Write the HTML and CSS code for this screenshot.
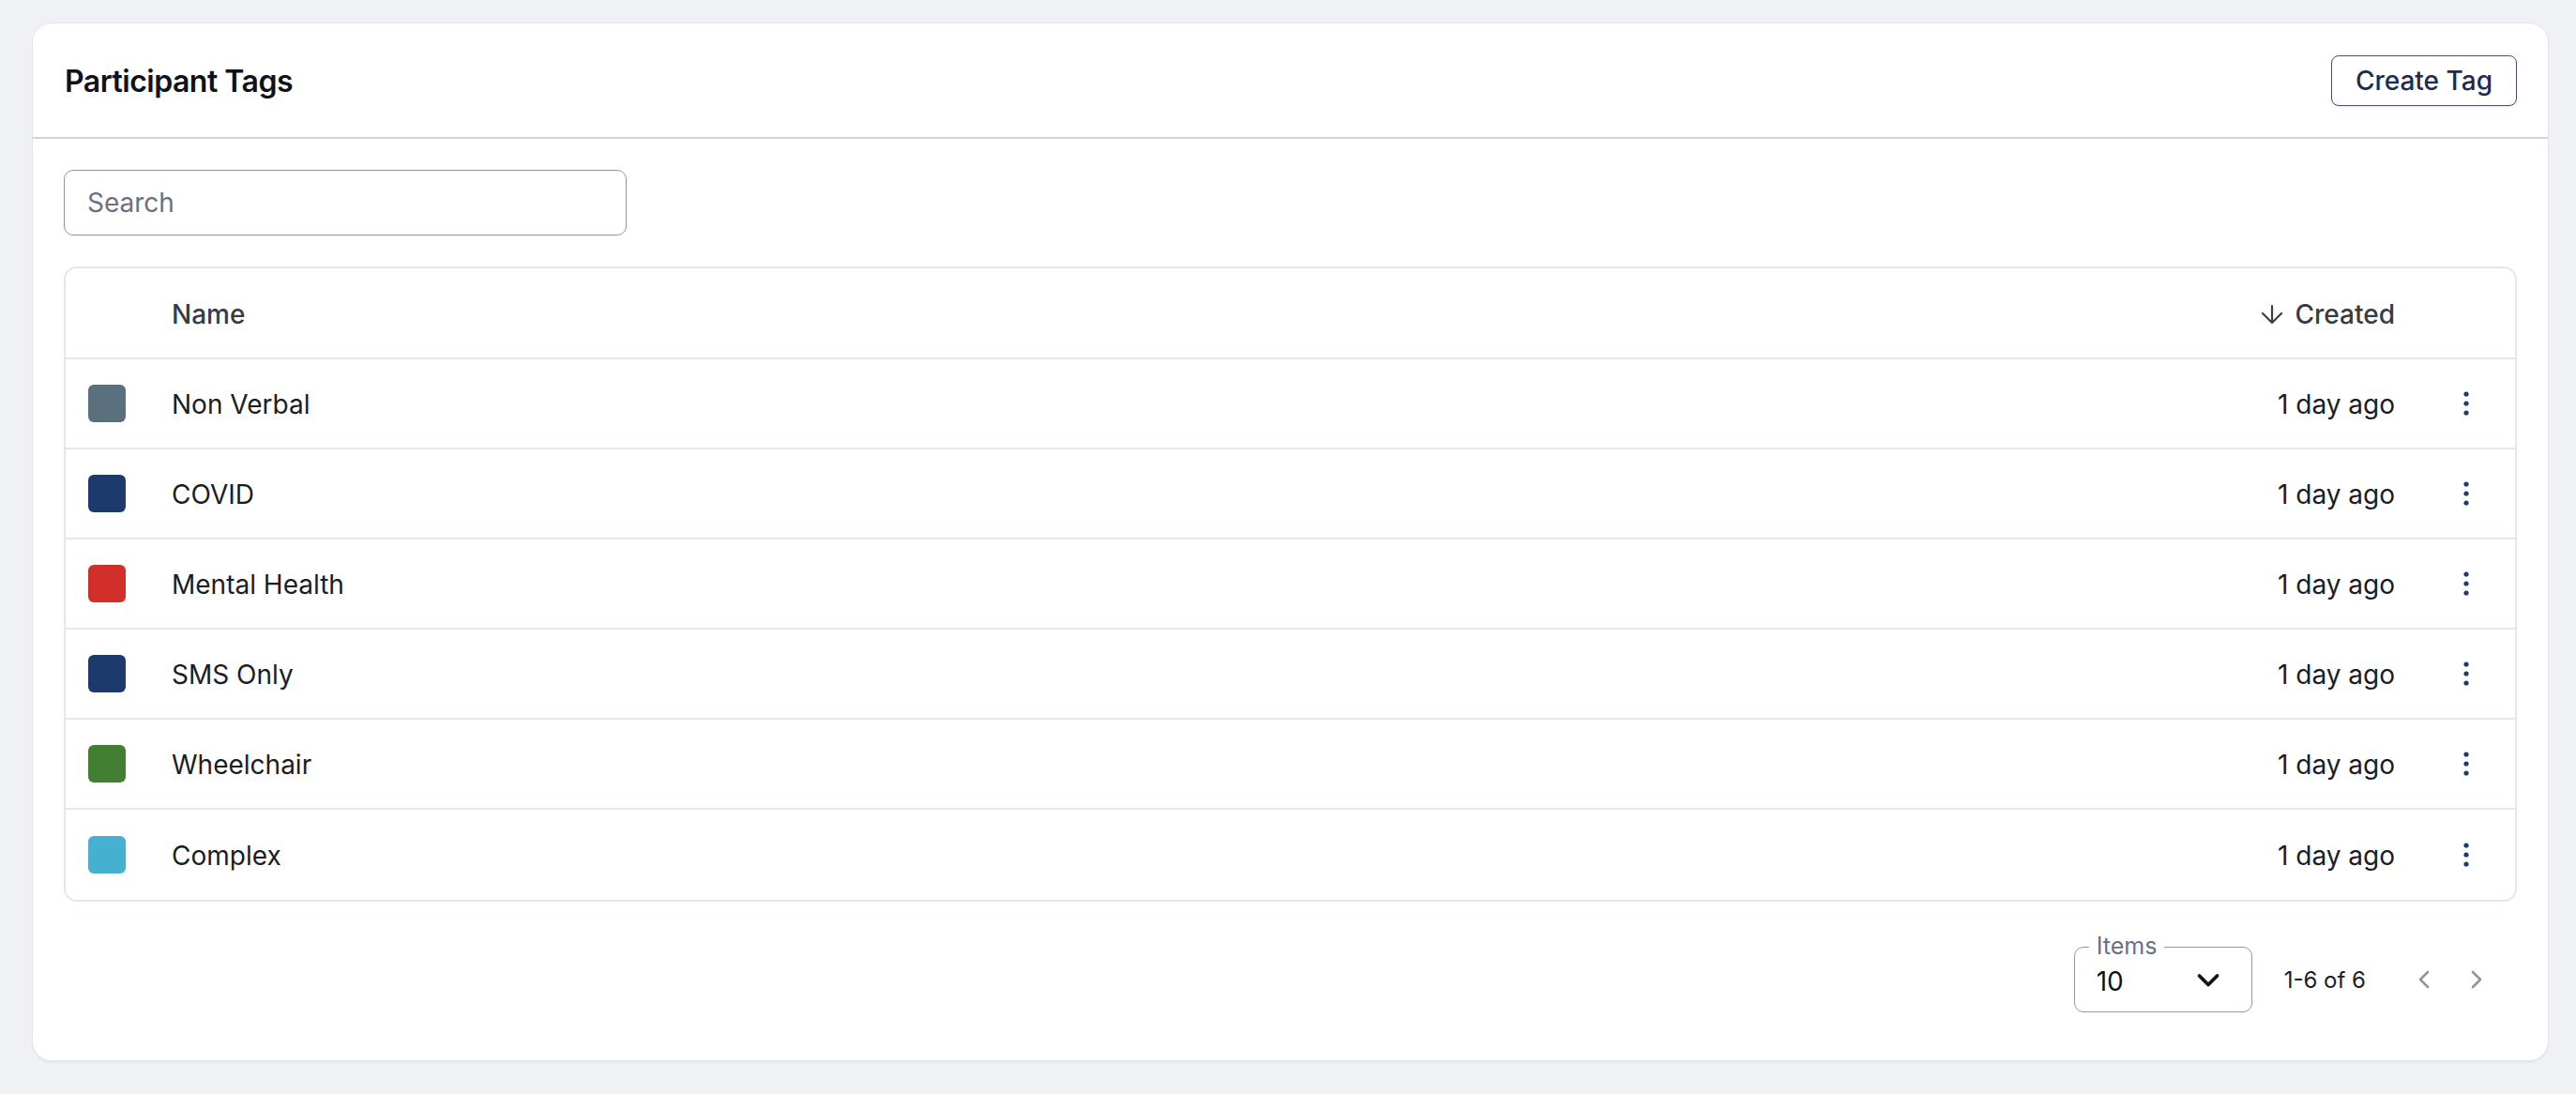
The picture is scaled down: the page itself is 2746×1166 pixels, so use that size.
FILE: index.html
```html
<!DOCTYPE html>
<html lang="en">
<head>
<meta charset="utf-8">
<title>Participant Tags</title>
<link rel="stylesheet" href="styles.css">
</head>
<body>
<main class="card">
  <header class="card-header">
    <h1 class="title">Participant Tags</h1>
    <button class="btn-outline" type="button">Create Tag</button>
  </header>
  <section class="card-body">
    <div class="search">
      <input class="search-input" type="text" placeholder="Search">
    </div>
    <div class="table">
      <div class="row head">
        <div class="cell swatch-cell"></div>
        <div class="cell name">Name</div>
        <div class="cell created">
          <svg class="sort-icon" viewBox="0 0 24 24" width="24" height="24" aria-hidden="true"><path d="M12 3v18M2 11l10 10 10-10" fill="none" stroke="#3a3e4a" stroke-width="2.2" stroke-linecap="round" stroke-linejoin="round"/></svg>
          <span>Created</span>
        </div>
        <div class="cell actions"></div>
      </div>
      <div class="row">
        <div class="cell swatch-cell"><span class="swatch c-slate"></span></div>
        <div class="cell name">Non Verbal</div>
        <div class="cell created">1 day ago</div>
        <div class="cell actions"><svg class="kebab" viewBox="0 0 10 30" width="10" height="30" aria-hidden="true"><circle cx="5" cy="5" r="2.6"/><circle cx="5" cy="15" r="2.6"/><circle cx="5" cy="25" r="2.6"/></svg></div>
      </div>
      <div class="row">
        <div class="cell swatch-cell"><span class="swatch c-navy"></span></div>
        <div class="cell name">COVID</div>
        <div class="cell created">1 day ago</div>
        <div class="cell actions"><svg class="kebab" viewBox="0 0 10 30" width="10" height="30" aria-hidden="true"><circle cx="5" cy="5" r="2.6"/><circle cx="5" cy="15" r="2.6"/><circle cx="5" cy="25" r="2.6"/></svg></div>
      </div>
      <div class="row">
        <div class="cell swatch-cell"><span class="swatch c-red"></span></div>
        <div class="cell name">Mental Health</div>
        <div class="cell created">1 day ago</div>
        <div class="cell actions"><svg class="kebab" viewBox="0 0 10 30" width="10" height="30" aria-hidden="true"><circle cx="5" cy="5" r="2.6"/><circle cx="5" cy="15" r="2.6"/><circle cx="5" cy="25" r="2.6"/></svg></div>
      </div>
      <div class="row">
        <div class="cell swatch-cell"><span class="swatch c-navy"></span></div>
        <div class="cell name">SMS Only</div>
        <div class="cell created">1 day ago</div>
        <div class="cell actions"><svg class="kebab" viewBox="0 0 10 30" width="10" height="30" aria-hidden="true"><circle cx="5" cy="5" r="2.6"/><circle cx="5" cy="15" r="2.6"/><circle cx="5" cy="25" r="2.6"/></svg></div>
      </div>
      <div class="row">
        <div class="cell swatch-cell"><span class="swatch c-green"></span></div>
        <div class="cell name">Wheelchair</div>
        <div class="cell created">1 day ago</div>
        <div class="cell actions"><svg class="kebab" viewBox="0 0 10 30" width="10" height="30" aria-hidden="true"><circle cx="5" cy="5" r="2.6"/><circle cx="5" cy="15" r="2.6"/><circle cx="5" cy="25" r="2.6"/></svg></div>
      </div>
      <div class="row last">
        <div class="cell swatch-cell"><span class="swatch c-cyan"></span></div>
        <div class="cell name">Complex</div>
        <div class="cell created">1 day ago</div>
        <div class="cell actions"><svg class="kebab" viewBox="0 0 10 30" width="10" height="30" aria-hidden="true"><circle cx="5" cy="5" r="2.6"/><circle cx="5" cy="15" r="2.6"/><circle cx="5" cy="25" r="2.6"/></svg></div>
      </div>
    </div>
    <div class="pagination">
      <div class="select">
        <span class="select-label">Items</span>
        <span class="select-value">10</span>
        <svg class="select-chevron" viewBox="0 0 26 18" width="26" height="18" aria-hidden="true"><path d="M3.5 4l9.5 9.5L22.5 4" fill="none" stroke="#111318" stroke-width="3.8" stroke-linecap="round" stroke-linejoin="round"/></svg>
      </div>
      <span class="range">1-6 of 6</span>
      <button class="page-btn" type="button" aria-label="Previous page"><svg viewBox="0 0 14 20" width="14" height="20" aria-hidden="true"><path d="M11 2L3 10l8 8" fill="none" stroke="#8f95a4" stroke-width="2.6" stroke-linecap="round" stroke-linejoin="round"/></svg></button>
      <button class="page-btn" type="button" aria-label="Next page"><svg viewBox="0 0 14 20" width="14" height="20" aria-hidden="true"><path d="M3 2l8 8-8 8" fill="none" stroke="#8f95a4" stroke-width="2.6" stroke-linecap="round" stroke-linejoin="round"/></svg></button>
    </div>
  </section>
</main>
</body>
</html>
```

FILE: styles.css
```css
* { box-sizing: border-box; }

html, body {
  margin: 0;
  padding: 0;
}

body {
  background: #f0f1f5;
  font-family: Inter, "Noto Sans", "Liberation Sans", sans-serif;
  color: #1a1d26;
  padding: 25px 30px 0 35px;
  height: 1166px;
  overflow: hidden;
}

.card {
  background: #ffffff;
  border-radius: 20px;
  box-shadow: 0 0 0 1px #e3e5ee, 0 2px 3px rgba(30, 40, 80, 0.08);
  height: 1105px;
  display: flex;
  flex-direction: column;
}

.card-header {
  height: 123px;
  border-bottom: 2px solid #d0d4dc;
  display: flex;
  align-items: center;
  justify-content: space-between;
  padding: 0 33px 0 34px;
}

.title {
  margin: 0;
  font-size: 32px;
  line-height: 40px;
  font-weight: 600;
  color: #0f121a;
  letter-spacing: -0.5px;
  padding-top: 2px;
}

.btn-outline {
  height: 54px;
  padding: 0 25px;
  border: 1.5px solid #46506f;
  border-radius: 8px;
  background: #ffffff;
  color: #1e2a52;
  font-family: inherit;
  font-size: 28px;
  font-weight: 500;
  box-shadow: 0 1px 2px rgba(20, 30, 60, 0.1);
}

.card-body {
  padding: 33px 33px 0 33px;
  display: flex;
  flex-direction: column;
}

.search {
  width: 600px;
}

.search-input {
  width: 100%;
  height: 70px;
  border: 1.5px solid #8f95a3;
  border-radius: 10px;
  padding: 0 24px;
  font-family: inherit;
  font-size: 28px;
  color: #1a1d26;
  outline: none;
}

.search-input::placeholder {
  color: #6b7184;
}

.table {
  margin-top: 33px;
  border: 2px solid #e3e7f0;
  border-radius: 14px;
}

.row {
  display: grid;
  grid-template-columns: 113px 1fr auto 128px;
  height: 96px;
  border-bottom: 2px solid #e3e7f0;
  align-items: center;
}

.row.head {
  height: 97px;
}

.row.last {
  border-bottom: none;
  height: 96px;
}

.cell {
  font-size: 28px;
  line-height: 34px;
  color: #1a1d26;
  padding-top: 2px;
}

.head .cell {
  font-weight: 500;
  color: #373b46;
}

.swatch-cell {
  padding-left: 24px;
  padding-top: 0;
  display: flex;
  align-items: center;
}

.swatch {
  width: 40px;
  height: 40px;
  border-radius: 6px;
  display: block;
}

.c-slate { background: #5b707e; }
.c-navy { background: #1c3a6b; }
.c-red { background: #d32f2a; }
.c-green { background: #437f33; }
.c-cyan { background: #45b0cf; }

.created {
  text-align: right;
  display: flex;
  align-items: center;
  justify-content: flex-end;
  gap: 13px;
}

.sort-icon {
  display: block;
}

.actions {
  display: flex;
  align-items: center;
  padding-left: 71px;
  padding-top: 0;
}

.kebab {
  display: block;
  fill: #1e3a6e;
}

.pagination {
  margin-top: 48px;
  height: 70px;
  display: flex;
  align-items: center;
  justify-content: flex-end;
  padding-right: 15px;
}

.select {
  position: relative;
  width: 190px;
  height: 70px;
  border: 1.5px solid #9197a6;
  border-radius: 10px;
  display: flex;
  align-items: center;
  justify-content: space-between;
  padding: 0 33px 0 23px;
  margin-right: 34px;
}

.select-label {
  position: absolute;
  top: -17px;
  left: 15px;
  padding: 0 8px;
  background: #ffffff;
  font-size: 25px;
  line-height: 30px;
  color: #6b7184;
}

.select-value {
  font-size: 28px;
  color: #111318;
  padding-top: 4px;
}

.select-chevron {
  display: block;
  margin-top: 2px;
}

.range {
  font-size: 24px;
  color: #1a1d26;
  margin-right: 34px;
}

.page-btn {
  width: 56px;
  height: 48px;
  border: none;
  background: transparent;
  padding: 0;
  display: flex;
  align-items: center;
  justify-content: center;
}

.page-btn svg {
  display: block;
}
```
